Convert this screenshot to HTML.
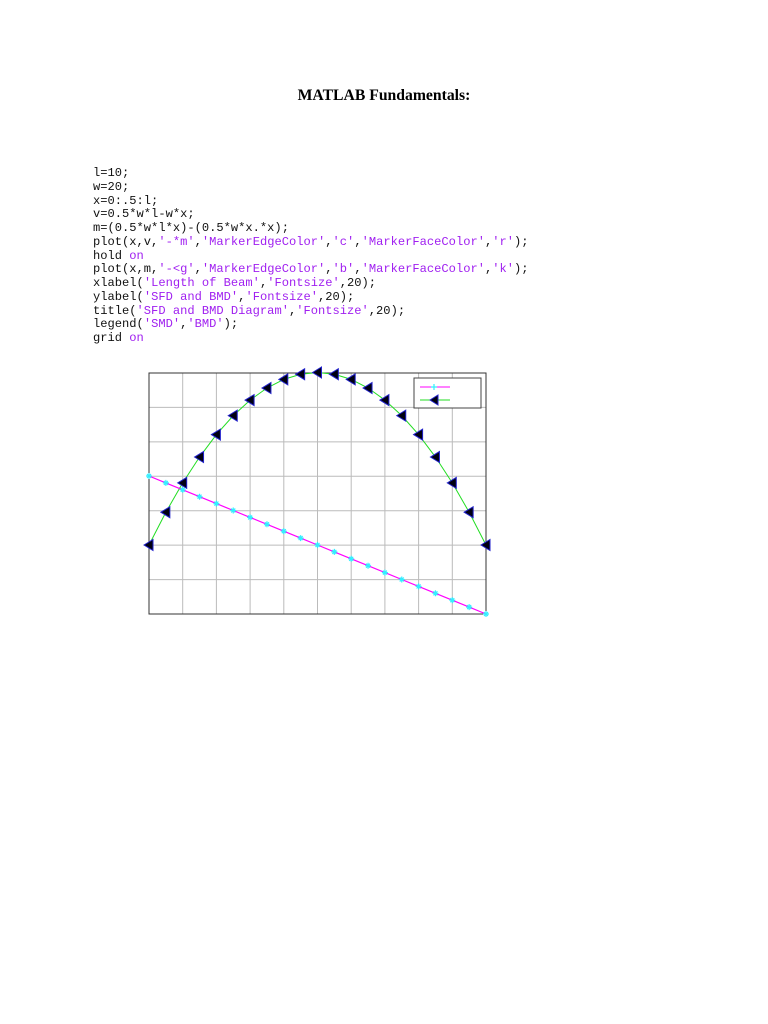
<!DOCTYPE html>
<html><head><meta charset="utf-8"><style>
body{margin:0;width:768px;height:1024px;background:#fff;position:relative;overflow:hidden}
h1{position:absolute;left:0;width:768px;top:87px;margin:0;text-align:center;font:bold 15.7px "Liberation Serif",serif;color:#000}
pre{position:absolute;left:93px;top:167px;margin:0;font:12.1px/13.75px "Liberation Mono",monospace;color:#111}
.s{color:#a020f0}.k{color:#a020f0}
svg{position:absolute;left:0;top:0}
</style></head><body>
<h1>MATLAB Fundamentals:</h1>
<pre>l=10;
w=20;
x=0:.5:l;
v=0.5*w*l-w*x;
m=(0.5*w*l*x)-(0.5*w*x.*x);
plot(x,v,<span class="s">'-*m'</span>,<span class="s">'MarkerEdgeColor'</span>,<span class="s">'c'</span>,<span class="s">'MarkerFaceColor'</span>,<span class="s">'r'</span>);
hold <span class="k">on</span>
plot(x,m,<span class="s">'-&lt;g'</span>,<span class="s">'MarkerEdgeColor'</span>,<span class="s">'b'</span>,<span class="s">'MarkerFaceColor'</span>,<span class="s">'k'</span>);
xlabel(<span class="s">'Length of Beam'</span>,<span class="s">'Fontsize'</span>,20);
ylabel(<span class="s">'SFD and BMD'</span>,<span class="s">'Fontsize'</span>,20);
title(<span class="s">'SFD and BMD Diagram'</span>,<span class="s">'Fontsize'</span>,20);
legend(<span class="s">'SMD'</span>,<span class="s">'BMD'</span>);
grid <span class="k">on</span></pre>
<svg id="p" width="768" height="1024"></svg>
<script>
var s='',x0=149,x1=486,y0=373,y1=614;
for(var i=0;i<=10;i++){var x=x0+(x1-x0)*i/10;s+='<line x1="'+x+'" y1="'+y0+'" x2="'+x+'" y2="'+y1+'" stroke="#bbb" stroke-width="1"/>';}
for(var j=0;j<=7;j++){var y=y0+(y1-y0)*j/7;s+='<line x1="'+x0+'" y1="'+y+'" x2="'+x1+'" y2="'+y+'" stroke="#bbb" stroke-width="1"/>';}
s+='<rect x="'+x0+'" y="'+y0+'" width="'+(x1-x0)+'" height="'+(y1-y0)+'" fill="none" stroke="#333" stroke-width="1"/>';
function X(t){return x0+(x1-x0)*t/10}
function Y(v){return 545-v*0.69}
var pv='',pm='';
for(var k=0;k<=20;k++){var t=k*0.5,v=100-20*t,m=10*t*(10-t);
pv+=X(t)+','+Y(v)+' ';pm+=X(t)+','+Y(m)+' ';}
s+='<polyline points="'+pm+'" fill="none" stroke="#2d2" stroke-width="1"/>';
s+='<polyline points="'+pv+'" fill="none" stroke="#f0f" stroke-width="1.2"/>';
for(var k=0;k<=20;k++){var t=k*0.5,v=100-20*t,m=10*t*(10-t);var a=X(t),b=Y(m),c=Y(v);
s+='<polygon points="'+(a-5)+','+b+' '+(a+4)+','+(b-5.5)+' '+(a+4)+','+(b+5.5)+'" fill="#001" stroke="#22c" stroke-width="1"/>';
s+='<path d="M'+(a-3)+','+c+'h6M'+a+','+(c-3)+'v6M'+(a-2)+','+(c-2)+'l4,4M'+(a+2)+','+(c-2)+'l-4,4" stroke="#3ef" stroke-width="1.2"/>';}
s+='<rect x="414" y="378" width="67" height="30" fill="#fff" stroke="#444"/>';
s+='<line x1="420" y1="387" x2="450" y2="387" stroke="#f0f"/><path d="M431,387h6M434,384v6" stroke="#3ef" stroke-width="1.2"/>';
s+='<line x1="420" y1="400" x2="450" y2="400" stroke="#2d2"/><polygon points="430,400 438,395 438,405" fill="#001" stroke="#22c"/>';
document.getElementById('p').innerHTML=s;
</script>
</body></html>
